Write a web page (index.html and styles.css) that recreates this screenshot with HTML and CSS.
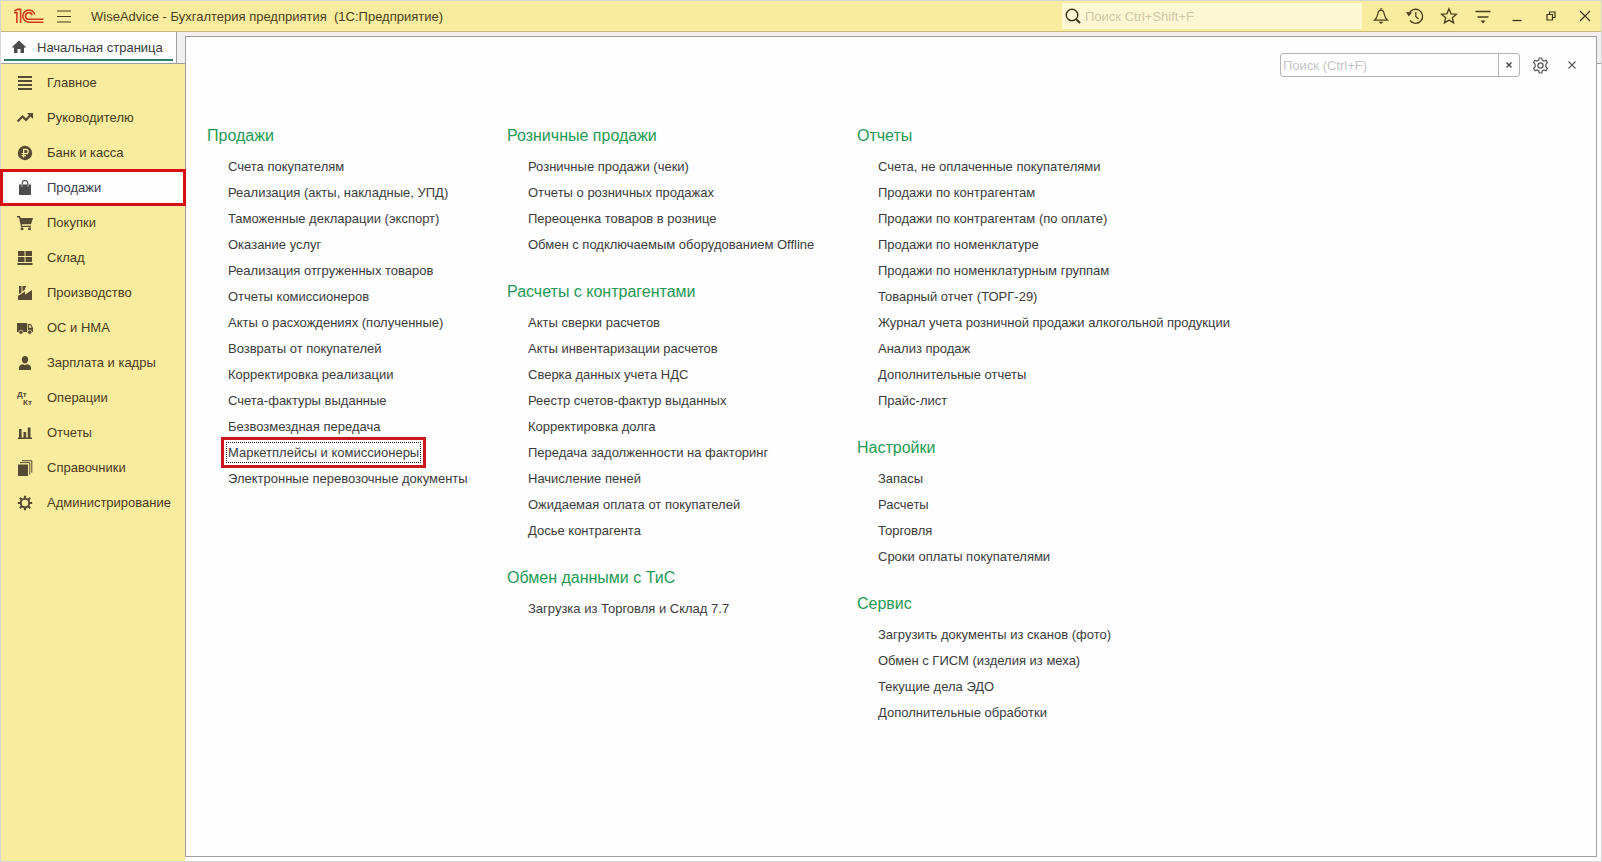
FILE: index.html
```html
<!DOCTYPE html>
<html lang="ru">
<head>
    <meta charset="UTF-8">
    <meta name="viewport" content="width=device-width, initial-scale=1.0">
    <title>WiseAdvice - Бухгалтерия предприятия</title>
    <link rel="stylesheet" href="styles.css">
</head>
<body>
<div class="window">
    <header class="topbar">
        <svg class="logo" width="30" height="16" viewBox="0 0 30 16" fill="none" stroke="#cf3d1c" stroke-width="1.6">
            <path d="M0 4.6H2.9V15M0.6 2.8L3.6 1.4H6.6V15"/>
            <path d="M20.8 6.6A6.1 6.1 0 1 0 15 14.2H29.5"/>
            <path d="M18 7.2A3.3 3.3 0 1 0 15 11.3H29.5"/>
        </svg>
        <button class="icon-btn burger" aria-label="Меню">
            <svg width="16" height="14" viewBox="0 0 16 14" stroke="#4a3f1c" stroke-width="1.2"><path d="M1 2H15M1 7.5H15M1 13H15"/></svg>
        </button>
        <div class="title">WiseAdvice - Бухгалтерия предприятия&nbsp; (1С:Предприятие)</div>
        <div class="global-search">
            <svg width="16" height="16" viewBox="0 0 16 16" fill="none" stroke="#3d3418"><circle cx="7" cy="7" r="5.8" stroke-width="1.4"/><path d="M11 11L15 15" stroke-width="2"/></svg>
            <input type="text" placeholder="Поиск Ctrl+Shift+F" aria-label="Поиск Ctrl+Shift+F">
        </div>
        <div class="tools">
            <button class="icon-btn" aria-label="Уведомления">
                <svg width="16" height="18" viewBox="0 0 16 18" fill="none" stroke="#4a3f1c" stroke-width="1.3"><path d="M1.5 13.2H14.5C12.2 11 11.6 9.5 11.2 7C10.8 4.6 9.8 3.2 8 3.2C6.2 3.2 5.2 4.6 4.8 7C4.4 9.5 3.8 11 1.5 13.2ZM8 1V3.2"/><path d="M5.5 14.8H10.5L8 17Z" fill="#4a3f1c" stroke="none"/></svg>
            </button>
            <button class="icon-btn" aria-label="История">
                <svg width="18" height="18" viewBox="0 0 18 18" fill="none" stroke="#4a3f1c" stroke-width="1.3"><path d="M3 7A7 7 0 1 1 4 13.5M9.8 5V9.5L12.5 12"/><path d="M0 5L6 5.6L2.8 9.4Z" fill="#4a3f1c" stroke="none"/></svg>
            </button>
            <button class="icon-btn" aria-label="Избранное">
                <svg width="18" height="18" viewBox="0 0 18 18" fill="none" stroke="#4a3f1c" stroke-width="1.3"><path d="M9 1.8L11.1 6.8L16.4 7.2L12.3 10.7L13.6 15.9L9 13.1L4.4 15.9L5.7 10.7L1.6 7.2L6.9 6.8Z"/></svg>
            </button>
            <button class="icon-btn" aria-label="Сервис и настройки">
                <svg width="16" height="16" viewBox="0 0 16 16" fill="none" stroke="#4a3f1c" stroke-width="1.3"><path d="M0.5 3.5H15.5M2.5 9H13.5"/><path d="M5.5 12.5H10.5L8 15.5Z" fill="#4a3f1c" stroke="none"/></svg>
            </button>
            <button class="icon-btn" aria-label="Свернуть">
                <svg width="12" height="12" viewBox="0 0 12 12" stroke="#3d3418" stroke-width="1.3"><path d="M1.5 10.5H10.5"/></svg>
            </button>
            <button class="icon-btn" aria-label="Восстановить">
                <svg width="10" height="10" viewBox="0 0 10 10" fill="none" stroke="#3d3418" stroke-width="1.2"><path d="M1 3.5H6.5V9H1ZM3.5 3.5V1H9V6.5H6.5"/></svg>
            </button>
            <button class="icon-btn" aria-label="Закрыть">
                <svg width="12" height="12" viewBox="0 0 12 12" stroke="#3d3418" stroke-width="1.2"><path d="M1 1L11 11M11 1L1 11"/></svg>
            </button>
        </div>
    </header>

    <div class="workspace">
        <div class="left">
            <div class="tabs">
                <a class="tab" href="#">
                    <svg width="16" height="14" viewBox="0 0 16 14" fill="#4c4c4c"><path d="M8 0.5L15.5 7.5H13V13H9.5V9H6.5V13H3V7.5H0.5Z"/></svg>
                    Начальная страница
                </a>
            </div>
            <nav class="sidebar">
                <a href="#"><svg viewBox="0 0 16 16"><path d="M1 1H15V3H1ZM1 5H15V7H1ZM1 9H15V11H1ZM1 13H15V15H1Z"/></svg>Главное</a>
                <a href="#"><svg viewBox="0 0 16 16"><path d="M0.5 11.5L5.5 6.5L9 10L13.5 5" fill="none" stroke="#574a35" stroke-width="2.2"/><path d="M10 3H16V9Z"/></svg>Руководителю</a>
                <a href="#"><svg viewBox="0 0 16 16"><circle cx="8" cy="8" r="7.2"/><path d="M6.6 12.5V4.3H9A2.1 2.1 0 0 1 9 8.6H4.6M4.6 10.6H9" fill="none" stroke="#f9ec9e" stroke-width="1.3"/></svg>Банк и касса</a>
                <a href="#" class="active"><svg viewBox="0 0 16 16"><path d="M2 4.5H4.5V7H6V4.5H10V7H11.5V4.5H14V15H2Z"/><path d="M5.2 7V3.2A2.8 2.8 0 0 1 10.8 3.2V7" fill="none" stroke="#4c4c4c" stroke-width="1.1"/></svg>Продажи</a>
                <a href="#"><svg viewBox="0 0 16 16"><path d="M0 1H3L3.6 3H16L14 9.2H4.8L5 10.8H14V12H4L2 2.4H0Z"/><circle cx="5" cy="13.8" r="1.5"/><circle cx="12.5" cy="13.8" r="1.5"/></svg>Покупки</a>
                <a href="#"><svg viewBox="0 0 16 16"><path d="M1 1H7.5V6H1ZM8.5 1H15V6H8.5ZM1 7H7.5V12H1ZM8.5 7H15V12H8.5ZM0.5 13H15.5V15H0.5Z"/></svg>Склад</a>
                <a href="#"><svg viewBox="0 0 16 16"><path d="M1 15V11L8 6.5V9.8L15 5V15Z"/><path d="M2 1H4.5V7.5L2 9ZM5.5 1H9V2.5H8V4.5L5.5 6.5Z"/></svg>Производство</a>
                <a href="#"><svg viewBox="0 0 16 16"><path d="M0 3H10V12H0ZM10.8 4H14L16 8V12H10.8Z"/><path d="M12 5.2H13.5L14.7 7.8H12Z" fill="#f9ec9e"/><circle cx="4" cy="12.2" r="2.1" stroke="#f9ec9e" stroke-width="0.7"/><circle cx="12.7" cy="12.2" r="2.1" stroke="#f9ec9e" stroke-width="0.7"/></svg>ОС и НМА</a>
                <a href="#"><svg viewBox="0 0 16 16"><path d="M8 1C10 1 11.2 2.3 11.2 4.4C11.2 6.5 10 8.4 8 8.4C6 8.4 4.8 6.5 4.8 4.4C4.8 2.3 6 1 8 1ZM2 15V12.5C2 10.5 4 9.5 5.8 9.2Q8 10.8 10.2 9.2C12 9.5 14 10.5 14 12.5V15Z"/></svg>Зарплата и кадры</a>
                <a href="#"><svg viewBox="0 0 16 16"><text x="0" y="7">Дт</text><text x="6" y="15">Кт</text></svg>Операции</a>
                <a href="#"><svg viewBox="0 0 16 16"><path d="M1 12.5H15V14H1ZM2 4H4.6V12.5H2ZM6.5 7H9.2V12.5H6.5ZM10.8 2.5H13.5V12.5H10.8Z"/></svg>Отчеты</a>
                <a href="#"><svg viewBox="0 0 16 16"><path d="M1 4.5H11V16H1Z"/><path d="M3 2.6H12.8V14.5M5 0.7H14.8V12.5" fill="none" stroke="#574a35" stroke-width="1"/></svg>Справочники</a>
                <a href="#"><svg viewBox="0 0 16 16"><circle cx="8" cy="8" r="4.2" fill="none" stroke="#574a35" stroke-width="2"/><path d="M8 0.8V4M8 12V15.2M0.8 8H4M12 8H15.2M2.9 2.9L5 5M11 11L13.1 13.1M13.1 2.9L11 5M5 11L2.9 13.1" fill="none" stroke="#574a35" stroke-width="2.2"/><circle cx="8" cy="8" r="3" fill="#f9ec9e"/></svg>Администрирование</a>
            </nav>
        </div>

        <div class="gutter"></div>

        <main class="panel">
            <div class="panel-tools">
                <div class="panel-search">
                    <input type="text" placeholder="Поиск (Ctrl+F)" aria-label="Поиск (Ctrl+F)">
                    <button aria-label="Очистить"><svg width="6" height="6" viewBox="0 0 6 6" stroke="#444" stroke-width="1.3"><path d="M0.5 0.5L5.5 5.5M5.5 0.5L0.5 5.5"/></svg></button>
                </div>
                <button class="icon-btn gear" aria-label="Настройка">
                    <svg width="17" height="17" viewBox="0 0 17 17" fill="none" stroke="#555" stroke-width="1.2"><path d="M6.8 3L7.2 1H9.8L10.2 3L12 4L14 3.3L15.4 5.6L13.9 7.2V9.8L15.4 11.4L14 13.7L12 13L10.2 14L9.8 16H7.2L6.8 14L5 13L3 13.7L1.6 11.4L3.1 9.8V7.2L1.6 5.6L3 3.3L5 4Z"/><circle cx="8.5" cy="8.5" r="2.6"/></svg>
                </button>
                <button class="icon-btn close" aria-label="Закрыть раздел">
                    <svg width="8" height="8" viewBox="0 0 8 8" stroke="#555" stroke-width="1.1"><path d="M0.5 0.5L7.5 7.5M7.5 0.5L0.5 7.5"/></svg>
                </button>
            </div>

            <div class="columns">
                <div class="column">
                    <section>
                        <h2>Продажи</h2>
                        <ul>
                            <li><a href="#">Счета покупателям</a></li>
                            <li><a href="#">Реализация (акты, накладные, УПД)</a></li>
                            <li><a href="#">Таможенные декларации (экспорт)</a></li>
                            <li><a href="#">Оказание услуг</a></li>
                            <li><a href="#">Реализация отгруженных товаров</a></li>
                            <li><a href="#">Отчеты комиссионеров</a></li>
                            <li><a href="#">Акты о расхождениях (полученные)</a></li>
                            <li><a href="#">Возвраты от покупателей</a></li>
                            <li><a href="#">Корректировка реализации</a></li>
                            <li><a href="#">Счета-фактуры выданные</a></li>
                            <li><a href="#">Безвозмездная передача</a></li>
                            <li><a href="#" class="marked">Маркетплейсы и комиссионеры</a></li>
                            <li><a href="#">Электронные перевозочные документы</a></li>
                        </ul>
                    </section>
                </div>
                <div class="column">
                    <section>
                        <h2>Розничные продажи</h2>
                        <ul>
                            <li><a href="#">Розничные продажи (чеки)</a></li>
                            <li><a href="#">Отчеты о розничных продажах</a></li>
                            <li><a href="#">Переоценка товаров в рознице</a></li>
                            <li><a href="#">Обмен с подключаемым оборудованием Offline</a></li>
                        </ul>
                    </section>
                    <section>
                        <h2>Расчеты с контрагентами</h2>
                        <ul>
                            <li><a href="#">Акты сверки расчетов</a></li>
                            <li><a href="#">Акты инвентаризации расчетов</a></li>
                            <li><a href="#">Сверка данных учета НДС</a></li>
                            <li><a href="#">Реестр счетов-фактур выданных</a></li>
                            <li><a href="#">Корректировка долга</a></li>
                            <li><a href="#">Передача задолженности на факторинг</a></li>
                            <li><a href="#">Начисление пеней</a></li>
                            <li><a href="#">Ожидаемая оплата от покупателей</a></li>
                            <li><a href="#">Досье контрагента</a></li>
                        </ul>
                    </section>
                    <section>
                        <h2>Обмен данными с ТиС</h2>
                        <ul>
                            <li><a href="#">Загрузка из Торговля и Склад 7.7</a></li>
                        </ul>
                    </section>
                </div>
                <div class="column">
                    <section>
                        <h2>Отчеты</h2>
                        <ul>
                            <li><a href="#">Счета, не оплаченные покупателями</a></li>
                            <li><a href="#">Продажи по контрагентам</a></li>
                            <li><a href="#">Продажи по контрагентам (по оплате)</a></li>
                            <li><a href="#">Продажи по номенклатуре</a></li>
                            <li><a href="#">Продажи по номенклатурным группам</a></li>
                            <li><a href="#">Товарный отчет (ТОРГ-29)</a></li>
                            <li><a href="#">Журнал учета розничной продажи алкогольной продукции</a></li>
                            <li><a href="#">Анализ продаж</a></li>
                            <li><a href="#">Дополнительные отчеты</a></li>
                            <li><a href="#">Прайс-лист</a></li>
                        </ul>
                    </section>
                    <section>
                        <h2>Настройки</h2>
                        <ul>
                            <li><a href="#">Запасы</a></li>
                            <li><a href="#">Расчеты</a></li>
                            <li><a href="#">Торговля</a></li>
                            <li><a href="#">Сроки оплаты покупателями</a></li>
                        </ul>
                    </section>
                    <section>
                        <h2>Сервис</h2>
                        <ul>
                            <li><a href="#">Загрузить документы из сканов (фото)</a></li>
                            <li><a href="#">Обмен с ГИСМ (изделия из меха)</a></li>
                            <li><a href="#">Текущие дела ЭДО</a></li>
                            <li><a href="#">Дополнительные обработки</a></li>
                        </ul>
                    </section>
                </div>
            </div>
        </main>
    </div>
</div>
</body>
</html>
```

FILE: styles.css
```css
* {
    box-sizing: border-box;
}

body {
    margin: 0;
    font-family: "Liberation Sans", Arial, sans-serif;
    font-size: 13px;
    color: #3c3c3c;
    background: #fefefe;
}

a {
    color: inherit;
    text-decoration: none;
}

button {
    border: none;
    background: none;
    padding: 0;
    cursor: pointer;
}

input {
    border: none;
    outline: none;
    background: none;
    font: inherit;
    padding: 0;
    min-width: 0;
}

.window {
    min-height: 100vh;
    display: flex;
    flex-direction: column;
    border: 1px solid #d6d6d6;
}

/* top bar */
.topbar {
    display: flex;
    align-items: center;
    height: 31px;
    padding-left: 13px;
    background: #f9ec9e;
    border-bottom: 1px solid #c6b878;
}

.icon-btn {
    display: flex;
    align-items: center;
    justify-content: center;
    width: 34px;
    height: 28px;
}

.burger {
    width: 16px;
    margin: 0 19px 0 12px;
}

.title {
    flex: 1;
    color: #4a3f1c;
    white-space: pre;
}

.global-search {
    display: flex;
    align-items: center;
    gap: 4px;
    width: 300px;
    height: 26px;
    padding-left: 3px;
    background: #fef7d5;
}

.global-search input {
    flex: 1;
}

.global-search input::placeholder {
    color: #cfc8a8;
}

.tools {
    display: flex;
    padding-left: 2px;
}

.tools .icon-btn:last-child {
    width: 33px;
}

/* left side */
.workspace {
    flex: 1;
    display: flex;
}

.left {
    display: flex;
    flex-direction: column;
    width: 184px;
}

.tabs {
    height: 32px;
    background: #f0f0f0;
    border-bottom: 1px solid #a0a0a0;
}

.tab {
    display: flex;
    align-items: center;
    gap: 10px;
    width: 176px;
    height: 31px;
    padding: 0 0 1px 10px;
    background: linear-gradient(#2e8060, #2e8060) 3px 27px / 169px 2px no-repeat #fefefe;
    border-right: 1px solid #a0a0a0;
}

.sidebar {
    flex: 1;
    padding-top: 1px;
    background: #f9ec9e;
    color: #4a3a20;
}

.sidebar a {
    display: flex;
    align-items: center;
    gap: 14px;
    height: 35px;
    padding-left: 16px;
}

.sidebar svg {
    width: 16px;
    height: 16px;
    fill: #574a35;
}

.sidebar text {
    font-size: 8px;
    font-weight: bold;
}

.sidebar .active {
    position: relative;
    background: #fefefe;
    color: #3c3c4c;
    outline: 3px solid #d60f14;
    outline-offset: -2px;
}

.sidebar .active svg {
    fill: #4c4c4c;
}

/* section panel */
.gutter {
    order: 3;
    width: 4px;
    height: 32px;
    background: #f0f0f0;
    border-bottom: 1px solid #a0a0a0;
}

.panel {
    flex: 1;
    margin: 4px 0;
    background: #fefefe;
    border: 1px solid #a0a0a0;
    box-shadow: 0 -4px #f3efef;
}

.panel-tools {
    display: flex;
    justify-content: flex-end;
    align-items: center;
    padding: 14px 12px 0 0;
}

.panel-search {
    display: flex;
    width: 240px;
    height: 24px;
    border: 1px solid #b4b4b4;
    border-radius: 3px;
}

.panel-search input {
    flex: 1;
    padding-left: 2px;
}

.panel-search input::placeholder {
    color: #c4c4c4;
}

.panel-search button {
    display: flex;
    align-items: center;
    justify-content: center;
    width: 21px;
    border-left: 1px solid #b4b4b4;
}

.gear {
    width: 40px;
}

.close {
    width: 24px;
}

.columns {
    display: grid;
    grid-template-columns: 300px 350px 1fr;
    padding: 45px 21px;
}

section {
    margin-bottom: 22px;
}

h2 {
    margin: 0 0 6px;
    font-size: 16px;
    font-weight: normal;
    line-height: 24px;
    color: #1f9a55;
}

ul {
    margin: 0;
    padding: 0 0 0 21px;
    list-style: none;
}

li {
    line-height: 26px;
    white-space: nowrap;
}

.marked {
    padding: 2px 1px;
    border: 1px dotted #222;
    margin-left: -2px;
    outline: 3px solid #c8181e;
    outline-offset: 2px;
}
```
